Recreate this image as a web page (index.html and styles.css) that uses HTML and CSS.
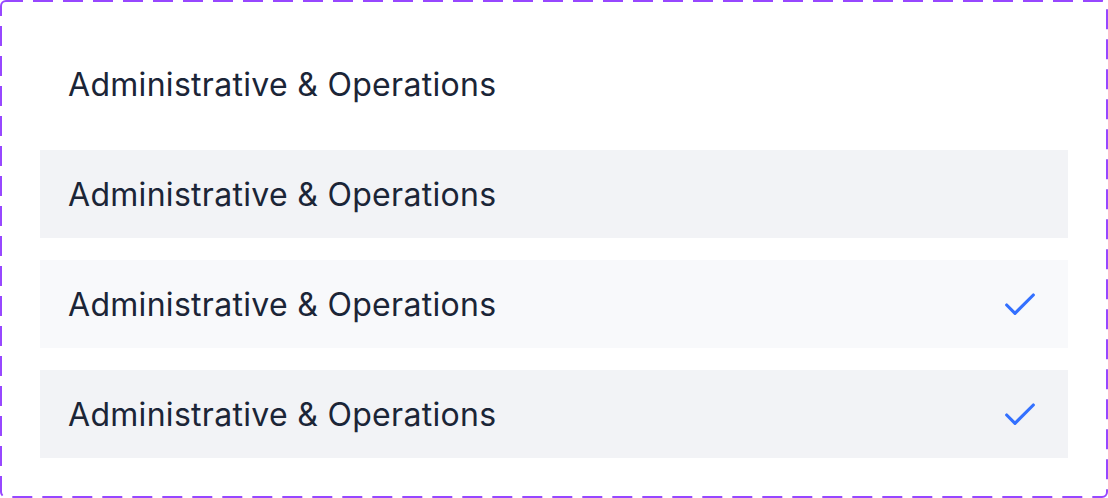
FILE: index.html
```html
<!DOCTYPE html>
<html lang="en">
<head>
    <meta charset="UTF-8">
    <title>Options</title>
    <link rel="stylesheet" href="styles.css">
</head>
<body>
    <div class="frame">
        <svg class="frame-border" width="1108" height="498" viewBox="0 0 1108 498">
            <rect x="1" y="1" width="1106" height="496" rx="5" ry="5" fill="none" stroke="#9747ff" stroke-width="2" stroke-dasharray="20 10" stroke-dashoffset="3"/>
        </svg>
        <div class="option">
            <span class="label">Administrative &amp; Operations</span>
        </div>
        <div class="option hover">
            <span class="label">Administrative &amp; Operations</span>
        </div>
        <div class="option selected">
            <span class="label">Administrative &amp; Operations</span>
            <svg class="check" viewBox="0 0 24 24" width="40" height="40"><path d="M20 6 9 17l-5-5" fill="none" stroke="currentColor" stroke-width="1.9" stroke-linecap="round" stroke-linejoin="round"/></svg>
        </div>
        <div class="option hover selected">
            <span class="label">Administrative &amp; Operations</span>
            <svg class="check" viewBox="0 0 24 24" width="40" height="40"><path d="M20 6 9 17l-5-5" fill="none" stroke="currentColor" stroke-width="1.9" stroke-linecap="round" stroke-linejoin="round"/></svg>
        </div>
    </div>
</body>
</html>
```

FILE: styles.css
```css
* {
    box-sizing: border-box;
    margin: 0;
    padding: 0;
}
body {
    font-family: Inter, 'Noto Sans', sans-serif;
    background-color: #fff;
    color: #1b2537;
}
.frame {
    position: relative;
    width: 1108px;
    height: 498px;
    padding: 40px;
    display: flex;
    flex-direction: column;
    gap: 22px;
}
.frame-border {
    position: absolute;
    top: 0;
    left: 0;
    pointer-events: none;
}
.option {
    height: 88px;
    display: flex;
    align-items: center;
    justify-content: space-between;
    padding: 1px 28px 0;
    background-color: #fff;
}
.option.hover {
    background-color: #f2f3f6;
}
.option.selected {
    background-color: #f8f9fb;
}
.option.hover.selected {
    background-color: #f2f3f6;
}
.label {
    font-size: 32px;
    line-height: 1;
    letter-spacing: 0.3px;
}
.check {
    color: #3370ff;
}
```
